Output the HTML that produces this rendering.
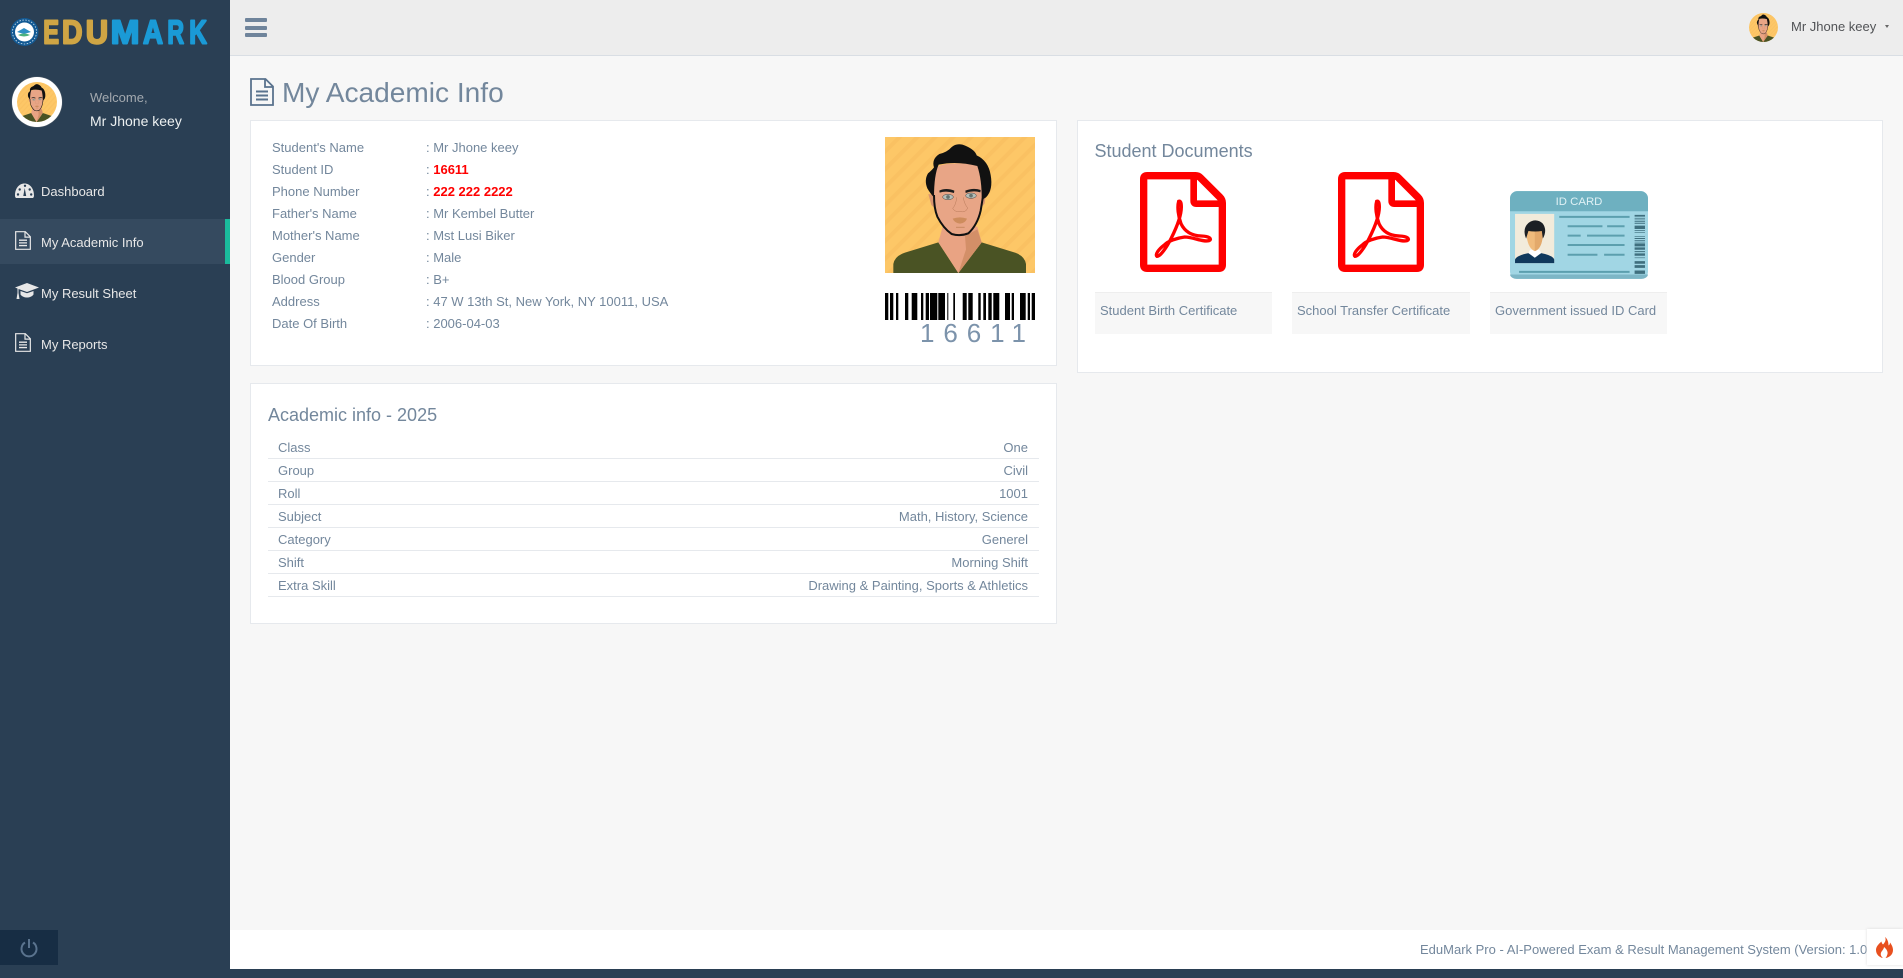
<!DOCTYPE html>
<html lang="en"><head><meta charset="utf-8"><title>My Academic Info</title>
<style>
html,body{margin:0;padding:0;width:1903px;height:978px;overflow:hidden;background:#2A3F54}
body{font:13px/18px "Liberation Sans",Arial,sans-serif;color:#73879C;position:relative}
.a{position:absolute;white-space:nowrap}
.panel{position:absolute;background:#fff;border:1px solid #E6E9ED;box-sizing:border-box}
svg{position:absolute;display:block;overflow:hidden}
.mi{color:#E7E7E7}
.cap{position:absolute;top:292px;height:42px;background:#F7F7F7;border-top:1px solid #eee;box-sizing:border-box;padding:9px 5px;white-space:nowrap}
.ln{position:absolute;left:268px;width:771px;height:1px;background:#E6E9ED}
.r{position:absolute;right:875px;white-space:nowrap}
.lg{font-family:"Liberation Sans",sans-serif;font-weight:700;font-size:33px;stroke-width:2;stroke-linejoin:round}
.g{fill:#CFA544;stroke:#CFA544}.b{fill:#1A9AD6;stroke:#1A9AD6}
</style></head>
<body>
<svg width="0" height="0" style="position:absolute">
<defs>
<pattern id="st" width="38" height="38" patternUnits="userSpaceOnUse" patternTransform="rotate(45)"><rect width="38" height="38" fill="#FDC767"/><rect width="12" height="38" fill="#FAC162"/></pattern>
<symbol id="face" viewBox="75 51 450 408" preserveAspectRatio="none">
<rect x="75" y="51" width="450" height="408" fill="url(#st)"/>
<path d="M100,459V432Q104,408 135,398L235,367 295,459 365,367 465,398Q494,408 498,432V459Z" fill="#4A5324"/>
<path d="M235,367L248,320H352L365,367 295,459Z" fill="#E9A383"/>
<path d="M365,367L352,328 315,348 318,388 295,459Z" fill="#D38F68"/>
<path d="M205,222L222,225 228,268 214,255Z M378,220L368,225 364,262 374,250Z" fill="#D9956F"/>
<path d="M222,225L222,150Q235,130 290,130 345,130 358,140L368,235 362,272Q350,312 325,338 300,350 275,342 245,320 232,288Z" fill="#E8A586"/>
<path d="M222,225Q222,265 232,290 250,325 275,342 300,350 325,340 352,315 362,272L368,235" fill="none" stroke="#111" stroke-width="6"/>
<path d="M222,232Q212,222 202,205 192,180 204,160 216,150 222,142 214,118 238,102 262,96 274,82 292,66 318,78 345,90 350,106 385,122 392,165 400,210 378,232L365,240Q366,180 352,138 290,122 236,134 222,165 222,232Z" fill="#111"/>
<path d="M238,212Q258,202 283,212L282,219Q258,211 239,218Z M316,212Q340,202 362,210L361,217Q340,210 317,219Z" fill="#1c1c1c"/>
<ellipse cx="264" cy="231" rx="16" ry="8" fill="#B5BEB8" stroke="#444" stroke-width="1.5"/><ellipse cx="333" cy="227" rx="16" ry="8" fill="#B5BEB8" stroke="#444" stroke-width="1.5"/>
<circle cx="264" cy="231" r="5.500" fill="#66736F"/><circle cx="333" cy="227" r="5.500" fill="#66736F"/>
<path d="M290,232Q288,255 278,265 285,277 300,275 318,278 323,264 312,250 310,232" fill="none" stroke="#B97A5A" stroke-width="1.500"/>
<path d="M278,296Q300,288 321,296 316,310 300,311 284,310 278,296Z" fill="#CE8C5D"/>
<path d="M288,322H314" stroke="#C98A62" stroke-width="3"/>
</symbol>
<symbol id="doc" viewBox="0 0 24 28" preserveAspectRatio="none">
<path d="M1,1H15.500L23,8.500V27H1ZM15,1V9H23" fill="none" stroke="currentColor" stroke-width="1.800"/>
<path d="M6,13.500H18M6,17.500H18M6,21.500H18" stroke="currentColor" stroke-width="2"/>
</symbol>
<symbol id="pdf" viewBox="211 157 258 300" preserveAspectRatio="none">
<path d="M222,178Q222,168 232,168H378Q386,168 392,174L450,232Q458,240 458,250V436Q458,446 448,446H232Q222,446 222,436Z" fill="none" stroke="#f00" stroke-width="22" stroke-linejoin="round"/>
<path d="M372,170V244Q372,252 380,252H458" fill="none" stroke="#f00" stroke-width="20" stroke-linejoin="round"/>
<path d="M327,245C322,262 326,290 334,312 345,335 365,348 395,349 420,350 428,358 418,363 400,368 370,352 345,352 320,355 295,365 285,375 265,390 256,405 262,410 272,410 290,385 305,355 320,325 335,290 335,262 335,248 332,243 327,245Z" fill="none" stroke="#f00" stroke-width="10"/>
</symbol>
</defs>
</svg>

<!-- sidebar -->
<div class="a" style="left:0;top:0;width:230px;height:978px;background:#2A3F54"></div>
<svg style="left:10px;top:17px" width="29" height="30" viewBox="0 0 29 30">
<circle cx="14.500" cy="15" r="14" fill="#135A94"/><circle cx="14.500" cy="15" r="9.500" fill="#fff"/>
<path d="M7,15L14,11 21,15 14,17Z" fill="#2E8FC4"/><path d="M8,18Q14,15 20,18 14,21 8,18Z" fill="#4CB27E"/>
<circle cx="14.500" cy="15" r="12" fill="none" stroke="#D5E4EE" stroke-width=".8" stroke-dasharray="1.500 1.500"/>
</svg>
<svg style="left:42px;top:14px" width="170" height="36" viewBox="0 0 170 36">
<text class="lg g" x="1.300" y="29.500" textLength="15.800" lengthAdjust="spacingAndGlyphs">E</text>
<text class="lg g" x="20" y="29.500" textLength="20.500" lengthAdjust="spacingAndGlyphs">D</text>
<text class="lg g" x="43.800" y="29.500" textLength="22.400" lengthAdjust="spacingAndGlyphs">U</text>
<text class="lg b" x="68.600" y="29.500" textLength="28.900" lengthAdjust="spacingAndGlyphs">M</text>
<text class="lg b" x="101" y="29.500" textLength="20" lengthAdjust="spacingAndGlyphs">A</text>
<text class="lg b" x="125.400" y="29.500" textLength="16.700" lengthAdjust="spacingAndGlyphs">R</text>
<text class="lg b" x="147.300" y="29.500" textLength="17.600" lengthAdjust="spacingAndGlyphs">K</text>
</svg>
<div class="a" style="left:12px;top:77px;width:50px;height:50px;border-radius:50%;background:#fff;box-shadow:0 0 1px #999"></div>
<svg style="left:17px;top:82px;border-radius:50%" width="40" height="40"><use href="#face" width="40" height="40"/></svg>
<div class="a" style="left:90px;top:89px;color:#A3A9AF">Welcome,</div>
<div class="a" style="left:90px;top:112px;color:#ECF0F1;font-size:14px">Mr Jhone keey</div>

<svg style="left:15px;top:183px" width="19" height="15" viewBox="0 0 19 15"><path fill-rule="evenodd" d="M0,12.500C0,5.500 4,0.500 9.500,0.500S19,5.500 19,12.500C19,13.500 18.700,14.500 18,15H1C.3,14.500 0,13.500 0,12.500ZM8.800,2.800a1.200,1.200 0 1,0 2.400,0a1.200,1.200 0 1,0-2.400,0ZM3.500,6.500a1.200,1.200 0 1,0 2.400,0a1.200,1.200 0 1,0-2.400,0ZM13.500,6.500a1.200,1.200 0 1,0 2.400,0a1.200,1.200 0 1,0-2.400,0ZM1.800,11.500a1.200,1.200 0 1,0 2.400,0a1.200,1.200 0 1,0-2.400,0ZM15,11.500a1.200,1.200 0 1,0 2.400,0a1.200,1.200 0 1,0-2.400,0ZM8.300,13L9.700,5 11.200,13Z" fill="#E7E7E7"/></svg>
<div class="a mi" style="left:41px;top:183px">Dashboard</div>
<div class="a" style="left:0;top:219px;width:225px;height:45px;background:#354A5F"></div>
<div class="a" style="left:225px;top:219px;width:5px;height:45px;background:#1ABB9C"></div>
<svg style="left:15px;top:231px;color:#E7E7E7" width="16" height="19"><use href="#doc" width="16" height="19"/></svg>
<div class="a mi" style="left:41px;top:234px">My Academic Info</div>
<svg style="left:15px;top:283px" width="24" height="18" viewBox="0 0 24 18"><path d="M12,0L24,4.500 12,9 3.500,6V10L4.500,16H1.500L2.500,10V5.500L0,4.500Z M5.500,8L12,10.300 18.500,8V11.500C17,13.500 14.500,14.500 12,14.500S7,13.500 5.500,11.500Z" fill="#E7E7E7"/></svg>
<div class="a mi" style="left:41px;top:285px">My Result Sheet</div>
<svg style="left:15px;top:333px;color:#E7E7E7" width="16" height="19"><use href="#doc" width="16" height="19"/></svg>
<div class="a mi" style="left:41px;top:336px">My Reports</div>

<div class="a" style="left:0;top:930px;width:58px;height:35px;background:#172D44"></div>
<svg style="left:19px;top:938px" width="20" height="20" viewBox="0 0 20 20"><path d="M6,4.500A7.500,7.500 0 1,0 14,4.500" fill="none" stroke="#5A738E" stroke-width="2"/><path d="M10,1V10" stroke="#5A738E" stroke-width="2"/></svg>

<!-- top nav -->
<div class="a" style="left:230px;top:0;width:1673px;height:56px;background:#EDEDED;border-bottom:1px solid #D9DEE4;box-sizing:border-box"></div>
<div class="a" style="left:230px;top:56px;width:1673px;height:874px;background:#F7F7F7"></div>
<div class="a" style="left:245px;top:18px;width:22px;height:4px;background:#6F849B;border-radius:1px"></div>
<div class="a" style="left:245px;top:26px;width:22px;height:4px;background:#6F849B;border-radius:1px"></div>
<div class="a" style="left:245px;top:33px;width:22px;height:4px;background:#6F849B;border-radius:1px"></div>
<svg style="left:1749px;top:13px;border-radius:50%" width="29" height="29"><use href="#face" width="29" height="29"/></svg>
<div class="a" style="left:1791px;top:18px;color:#515356">Mr Jhone keey</div>
<div class="a" style="left:1885px;top:25px;width:0;height:0;border:2.500px solid transparent;border-top:3px solid #666;border-bottom:0"></div>

<!-- title -->
<svg style="left:250px;top:78px;color:#5A738E" width="24" height="28"><use href="#doc" width="24" height="28"/></svg>
<div class="a" style="left:282px;top:76px;font-size:28.100px;line-height:34px">My Academic Info</div>

<!-- profile panel -->
<div class="panel" style="left:250px;top:120px;width:807px;height:246px"></div>
<div class="a" style="left:272px;top:139px">Student's Name</div><div class="a" style="left:426px;top:139px">: Mr Jhone keey</div>
<div class="a" style="left:272px;top:161px">Student ID</div><div class="a" style="left:426px;top:161px">: <b style="color:#f00">16611</b></div>
<div class="a" style="left:272px;top:183px">Phone Number</div><div class="a" style="left:426px;top:183px">: <b style="color:#f00">222 222 2222</b></div>
<div class="a" style="left:272px;top:205px">Father's Name</div><div class="a" style="left:426px;top:205px">: Mr Kembel Butter</div>
<div class="a" style="left:272px;top:227px">Mother's Name</div><div class="a" style="left:426px;top:227px">: Mst Lusi Biker</div>
<div class="a" style="left:272px;top:249px">Gender</div><div class="a" style="left:426px;top:249px">: Male</div>
<div class="a" style="left:272px;top:271px">Blood Group</div><div class="a" style="left:426px;top:271px">: B+</div>
<div class="a" style="left:272px;top:293px">Address</div><div class="a" style="left:426px;top:293px">: 47 W 13th St, New York, NY 10011, USA</div>
<div class="a" style="left:272px;top:315px">Date Of Birth</div><div class="a" style="left:426px;top:315px">: 2006-04-03</div>

<svg style="left:885px;top:137px" width="150" height="136"><use href="#face" width="150" height="136"/></svg>
<svg style="left:885px;top:293px" width="150" height="27" viewBox="0 0 150 27"><path fill="#000" d="M0,0h3.300v27h-3.300zM5,0h3.300v27h-3.300zM11,0h2.300v27h-2.300zM20,0h3.300v27h-3.300zM26.700,0h5.600v27h-5.600zM36,0h2.300v27h-2.300zM40.700,0h3.300v27h-3.300zM45,0h7.300v27h-7.300zM53.300,0h6.700v27h-6.700zM62.300,0h1v27h-1zM68.300,0h1.700v27h-1.700zM77.700,0h4v27h-4zM83.300,0h4.400v27h-4.400zM93.300,0h2.400v27h-2.400zM98.300,0h2.700v27h-2.700zM103.300,0h3.400v27h-3.400zM108.300,0h6v27h-6zM120,0h5v27h-5zM126.700,0h2.300v27h-2.300zM135,0h5.700v27h-5.700zM142.700,0h2.300v27h-2.300zM146.700,0h3.300v27h-3.300z"/></svg>
<div class="a" style="left:920px;top:318px;font-size:26px;line-height:30px;letter-spacing:8.900px;color:#7C93AB">16611</div>

<!-- academic panel -->
<div class="panel" style="left:250px;top:383px;width:807px;height:241px"></div>
<div class="a" style="left:268px;top:405px;font-size:18px;line-height:20px">Academic info - 2025</div>
<div class="a" style="left:278px;top:439px">Class</div><div class="r" style="top:439px">One</div><div class="ln" style="top:458px"></div>
<div class="a" style="left:278px;top:462px">Group</div><div class="r" style="top:462px">Civil</div><div class="ln" style="top:481px"></div>
<div class="a" style="left:278px;top:485px">Roll</div><div class="r" style="top:485px">1001</div><div class="ln" style="top:504px"></div>
<div class="a" style="left:278px;top:508px">Subject</div><div class="r" style="top:508px">Math, History, Science</div><div class="ln" style="top:527px"></div>
<div class="a" style="left:278px;top:531px">Category</div><div class="r" style="top:531px">Generel</div><div class="ln" style="top:550px"></div>
<div class="a" style="left:278px;top:554px">Shift</div><div class="r" style="top:554px">Morning Shift</div><div class="ln" style="top:573px"></div>
<div class="a" style="left:278px;top:577px">Extra Skill</div><div class="r" style="top:577px">Drawing &amp; Painting, Sports &amp; Athletics</div><div class="ln" style="top:596px"></div>

<!-- documents panel -->
<div class="panel" style="left:1077px;top:120px;width:806px;height:253px"></div>
<div class="a" style="left:1094.500px;top:141px;font-size:18px;line-height:20px">Student Documents</div>
<svg style="left:1140px;top:172px" width="86" height="100"><use href="#pdf" width="86" height="100"/></svg>
<svg style="left:1338px;top:172px" width="86" height="100"><use href="#pdf" width="86" height="100"/></svg>
<svg style="left:1510px;top:191px" width="138" height="88" viewBox="150 93 412 262">
<rect x="150" y="93" width="412" height="262" rx="22" fill="#A1D6E4"/>
<path d="M150,115a22,22 0 0,1 22-22H540a22,22 0 0,1 22,22V153H150Z" fill="#6EB0C0"/>
<path d="M150,342a20,14 0 0,0 20,13H542a20,14 0 0,0 20-13" fill="#7DB6C6"/>
<text x="356" y="135" text-anchor="middle" font-family="Liberation Sans" font-size="34" fill="#DFF1F5">ID CARD</text>
<rect x="165" y="161" width="117" height="147" fill="#F2EBDB"/>
<path d="M165,308V297Q170,285 205,278L224,285 243,278Q278,285 282,297V308Z" fill="#10395C"/>
<path d="M205,278L224,292 243,278 238,268H210Z" fill="#fff"/>
<path d="M200,215Q200,200 224,198 250,200 248,225 245,265 224,272 205,265 200,230Z" fill="#F0BB7C"/>
<path d="M224,198Q250,200 248,225 245,265 224,272Z" fill="#E3A96B"/>
<path d="M198,235Q186,205 205,188 228,172 248,190 262,210 248,235L245,212Q225,215 205,212Z" fill="#1B1F24"/>
<path d="M297,170H507M322,198H426M440,198H492M322,226H361M380,226H492M322,254H492M322,283H411M431,283H492M177,334H507" stroke="#5C9FAE" stroke-width="6"/>
<path d="M522,164h31v5h-31zM522,173h31v2h-31zM522,178h31v2h-31zM522,183h31v3h-31zM522,189h31v2h-31zM522,196h31v10h-31zM522,210h31v2h-31zM522,215h31v2h-31zM522,228h31v2h-31zM522,233h31v3h-31zM522,239h31v2h-31zM522,244h31v2h-31zM522,249h31v9h-31zM522,261h31v7h-31zM522,272h31v3h-31zM522,279h31v7h-31zM522,291h31v2h-31zM522,302h31v8h-31zM522,314h31v8h-31zM522,330h31v10h-31z" fill="#3F6F7E"/>
</svg>
<div class="cap" style="left:1095px;width:177px">Student Birth Certificate</div>
<div class="cap" style="left:1292px;width:178px">School Transfer Certificate</div>
<div class="cap" style="left:1490px;width:177px">Government issued ID Card</div>

<!-- footer -->
<div class="a" style="left:230px;top:930px;width:1673px;height:39px;background:#fff"></div>
<div class="a" style="left:1420px;top:941px">EduMark Pro - AI-Powered Exam &amp; Result Management System (Version: 1.0.0)</div>
<div class="a" style="left:1867px;top:929px;width:36px;height:36px;background:#fff;box-shadow:0 0 3px #ddd"></div>
<svg style="left:1876px;top:937px" width="17" height="21" viewBox="0 0 17 21"><path d="M9,0C10.500,3 9,5.500 7,7.500 6,6.500 5.500,5.500 5.500,4.500 2,7.500 0,10 0,13 0,17.500 3.500,20.500 7,21 4.500,19 4,16.500 6,14 7,12.500 8,11.500 8,10 10.500,12 12,14.500 11.500,17 11,18.500 10.500,20 9.500,21 13.500,20.500 17,17.500 17,13 17,10 15.500,7.500 14,5.500 14,7 13.500,8 12.500,8.500 12.500,5 11.500,2 9,0Z" fill="#E8501F"/></svg>
</body></html>
